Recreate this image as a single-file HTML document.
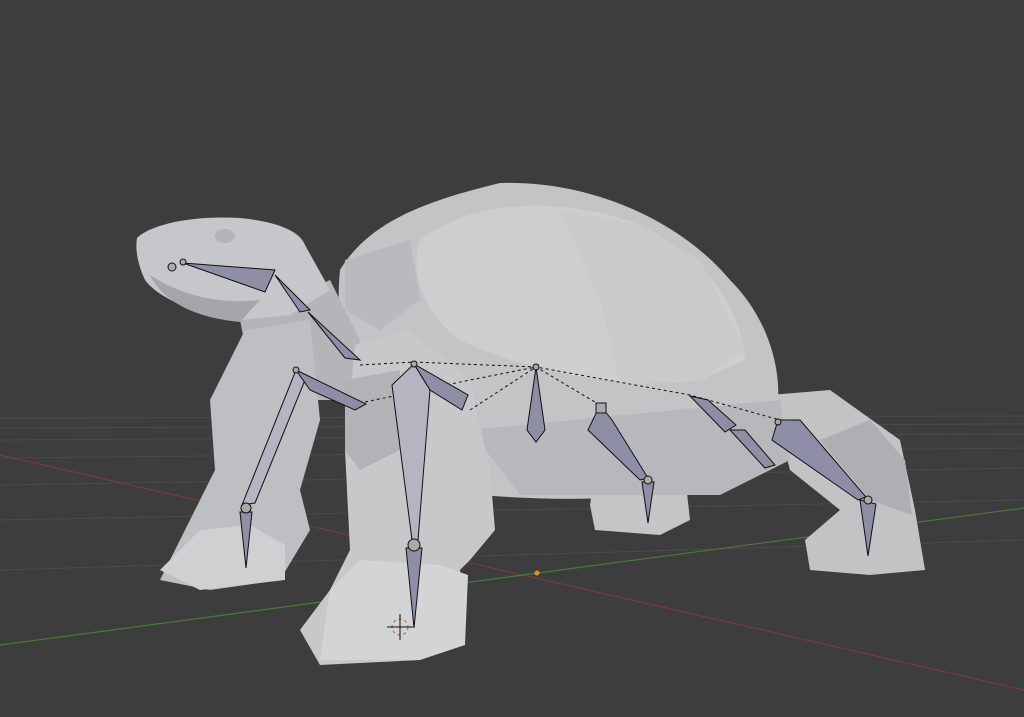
<!DOCTYPE html>
<html><head><style>
html,body{margin:0;padding:0;background:#3d3d3d;width:1024px;height:717px;overflow:hidden}
svg{display:block}
</style></head><body>
<svg width="1024" height="717" viewBox="0 0 1024 717" xmlns="http://www.w3.org/2000/svg">
<rect width="1024" height="717" fill="#3d3d3d"/>
<g stroke="#4a4a4a" stroke-width="1" fill="none">
<path d="M0 418 L1024 416"/><path d="M0 428 L1024 424"/><path d="M0 440 L1024 434"/>
<path d="M0 458 L1024 448"/><path d="M0 485 L1024 468"/><path d="M0 520 L1024 500"/>
<path d="M0 570 L1024 540"/>
</g>
<path d="M0 455 L1024 690" stroke="#7a3a3a" stroke-width="1.2"/>
<path d="M0 645 L1024 508" stroke="#4a7a3a" stroke-width="1.2"/>
<!-- back legs -->
<polygon points="600,440 680,430 690,520 660,535 595,530 590,505" fill="#c4c5c7"/>
<polygon points="770,395 830,390 900,440 915,510 925,570 870,575 810,570 805,540 840,510 790,470" fill="#c2c3c5"/>
<polygon points="820,440 870,420 905,460 912,515 870,500" fill="#aeafb2"/>
<!-- shell -->
<path d="M340 270 C370 220 430 200 500 183 C590 180 680 220 730 280 C770 320 780 370 778 400 L770 470 C700 495 600 505 480 495 C430 480 380 440 360 400 C345 360 335 320 340 270Z" fill="#c3c4c6"/>
<path d="M420 240 C470 200 560 195 640 225 C700 255 740 300 745 360 L700 380 C620 390 520 370 460 340 C420 310 410 270 420 240Z" fill="#cdcecf"/>
<path d="M560 210 L640 225 L700 260 L745 350 L700 380 L620 385 L600 300Z" fill="#c9cacc"/>
<path d="M470 430 L780 400 L790 460 L720 495 L520 495 Z" fill="#b7b8bb"/>
<path d="M345 260 L410 240 L420 300 L380 330 L345 310Z" fill="#b9babd"/>
<!-- neck + head -->
<polygon points="240,320 330,280 360,340 350,400 290,400 250,370" fill="#b4b5b8"/>
<path d="M137 238 C150 225 190 215 240 218 C280 222 300 232 305 245 L330 290 L290 315 L240 320 C200 315 160 300 145 280 C138 265 135 250 137 238Z" fill="#c6c7ca"/>
<path d="M150 275 C180 295 220 305 260 300 L240 322 C200 318 165 305 150 275Z" fill="#a5a6a9"/>
<ellipse cx="225" cy="236" rx="10" ry="7" fill="#b3b4b7"/>
<!-- front left leg -->
<polygon points="245,330 310,320 320,420 300,490 310,530 280,580 210,590 160,580 170,560 190,520 215,470 210,400" fill="#bebfc2"/>
<polygon points="160,570 200,530 250,525 285,545 285,580 200,590" fill="#cfd0d2"/>
<!-- front right leg -->
<polygon points="355,345 410,330 470,380 490,470 495,530 470,560 460,570 465,640 420,660 320,665 300,630 330,590 350,550 345,450" fill="#c7c8ca"/>
<polygon points="320,660 330,590 360,560 440,565 468,575 465,645 420,660" fill="#d3d4d6"/>
<polygon points="345,380 400,370 400,450 360,470 345,450" fill="#b2b3b6"/>
<!-- dashed relations -->
<g stroke="#111" stroke-width="1" stroke-dasharray="3,3" fill="none">
<path d="M360 365 L414 362 L536 367 L690 395 L780 420"/>
<path d="M365 402 L470 380 L536 367"/>
<path d="M470 410 L536 367 L600 405"/>
</g>
<!-- bones -->
<g fill="#8e8ea6" stroke="#111" stroke-width="1">
<polygon points="183,263 275,270 265,292"/>
<polygon points="275,275 310,310 300,312"/>
<polygon points="308,312 360,360 345,358"/>
<polygon points="296,370 305,380 255,503 242,505" fill="#b5b5c2"/>
<polygon points="296,370 366,404 355,410 310,390"/>
<polygon points="414,364 430,390 418,540 412,540 392,385" fill="#b5b5c2"/>
<polygon points="414,364 468,395 462,410 430,390"/>
<polygon points="536,367 545,430 536,442 527,430"/>
<polygon points="600,405 612,420 648,478 640,480 588,430"/>
<polygon points="690,396 708,400 736,425 725,432"/>
<polygon points="730,430 745,430 775,465 765,468"/>
<polygon points="778,420 800,420 866,497 858,500 772,440"/>
<polygon points="240,512 252,512 246,568"/>
<polygon points="406,548 422,548 414,628"/>
<polygon points="642,482 654,482 648,523"/>
<polygon points="860,500 876,504 868,556"/>
</g>
<g fill="#aaa" stroke="#111" stroke-width="1">
<circle cx="172" cy="267" r="4"/><circle cx="183" cy="262" r="3"/>
<circle cx="296" cy="370" r="3"/><circle cx="414" cy="364" r="3"/>
<circle cx="536" cy="367" r="3"/><circle cx="246" cy="508" r="5"/>
<circle cx="414" cy="545" r="6"/><circle cx="648" cy="480" r="4"/>
<circle cx="868" cy="500" r="4"/><circle cx="778" cy="422" r="3"/>
<rect x="596" y="403" width="10" height="10"/>
</g>
<circle cx="537" cy="573" r="2.5" fill="#e0902a"/>
<circle cx="400" cy="627" r="8" fill="none" stroke="#c44" stroke-dasharray="3,3"/>
<path d="M400 614 L400 640 M387 627 L413 627" stroke="#111" stroke-width="1"/>
</svg>
</body></html>
